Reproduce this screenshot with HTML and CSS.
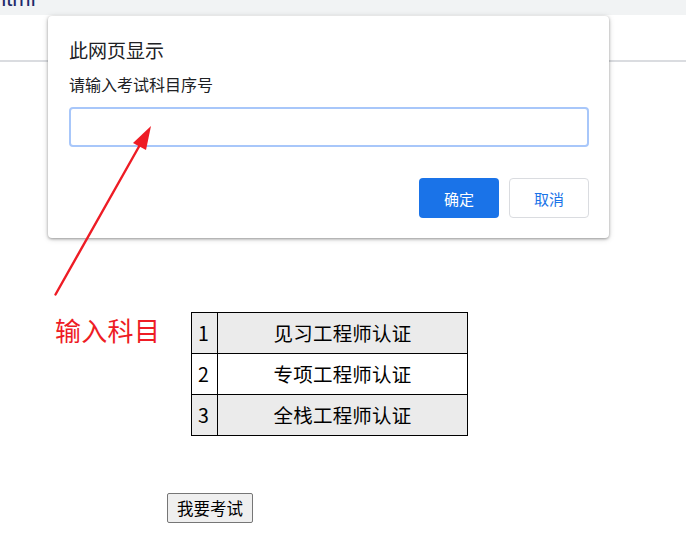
FILE: index.html
```html
<!DOCTYPE html>
<html lang="zh-CN">
<head>
<meta charset="utf-8">
<title>考试</title>
<link rel="stylesheet" href="styles.css">
</head>
<body>
<div class="tabbar"><span class="tabtext">html</span></div>
<div class="toolbar"></div>
<main class="page">
  <div class="row">
    <div class="note">输入科目</div>
    <table class="subjects">
      <tr class="odd"><td class="num">1</td><td class="name">见习工程师认证</td></tr>
      <tr><td class="num">2</td><td class="name">专项工程师认证</td></tr>
      <tr class="odd"><td class="num">3</td><td class="name">全栈工程师认证</td></tr>
    </table>
  </div>
  <button class="exam">我要考试</button>
</main>

<div class="dialog">
  <div class="dlg-title">此网页显示</div>
  <div class="dlg-label">请输入考试科目序号</div>
  <div class="dlg-input"></div>
  <div class="dlg-actions">
    <button class="btn primary">确定</button>
    <button class="btn secondary">取消</button>
  </div>
</div>

<svg class="arrow" width="686" height="534" viewBox="0 0 686 534">
  <line x1="55.5" y1="294.5" x2="141" y2="143" stroke="#ee1c25" stroke-width="2.4" stroke-linecap="round"/>
  <polygon points="151,126 146,150 133,143" fill="#ee1c25"/>
</svg>
</body>
</html>
```
FILE: styles.css
```css
html, body {
  margin: 0;
  padding: 0;
  background: #ffffff;
  width: 686px;
  height: 534px;
  overflow: hidden;
  font-family: "Noto Sans CJK SC", "Liberation Sans", sans-serif;
}

.tabbar {
  height: 15px;
  background: #f1f3f4;
  overflow: hidden;
  position: relative;
}
.tabtext {
  display: block;
  margin-top: -12px;
  margin-left: -6px;
  font-family: "Liberation Sans", sans-serif;
  font-size: 22px;
  line-height: 22px;
  color: #1f2a6b;
}

.toolbar {
  height: 45px;
  border-bottom: 2px solid #dadce0;
}

.page {
  padding-top: 250px;
  padding-left: 55px;
}

.row {
  display: flex;
  align-items: flex-start;
}

.note {
  color: #ee1c25;
  font-size: 26px;
  line-height: 36px;
  width: 136px;
  margin-top: 0;
  letter-spacing: 0.3px;
  white-space: nowrap;
}

.subjects {
  border-collapse: collapse;
  font-size: 19.5px;
  color: #000;
}
.subjects td {
  border: 1px solid #000;
  height: 40px;
  padding: 0;
  line-height: 40px;
}
.subjects tr.odd td { background: #ebebeb; }
.subjects .num {
  width: 26px;
  padding-left: 6px;
  box-sizing: border-box;
}
.subjects .name {
  width: 249px;
  text-align: center;
  letter-spacing: 0.2px;
}

.exam {
  display: block;
  margin-top: 57px;
  margin-left: 112px;
  height: 30px;
  padding: 0 9px;
  font-family: "Noto Sans CJK SC", sans-serif;
  font-size: 16.5px;
  line-height: 28px;
  color: #000;
  background: #efefef;
  border: 1px solid #767676;
  border-radius: 2px;
}

.dialog {
  position: absolute;
  left: 48px;
  top: 16px;
  width: 561px;
  height: 222px;
  box-sizing: border-box;
  background: #fff;
  border-radius: 4px;
  box-shadow: 0 1px 3px rgba(0,0,0,0.35), 0 1px 6px rgba(0,0,0,0.15);
  padding: 22px 20px 0 21px;
}
.dlg-title {
  font-size: 19px;
  line-height: 24px;
  color: #202124;
}
.dlg-label {
  margin-top: 12px;
  font-size: 16px;
  line-height: 20px;
  color: #202124;
}
.dlg-input {
  margin-top: 13px;
  height: 40px;
  box-sizing: border-box;
  border: 2px solid #a8c7fa;
  border-radius: 4px;
}
.dlg-actions {
  display: flex;
  justify-content: flex-end;
  gap: 10px;
  margin-top: 31px;
}
.btn {
  width: 80px;
  height: 40px;
  box-sizing: border-box;
  border-radius: 4px;
  font-family: "Noto Sans CJK SC", sans-serif;
  font-size: 15px;
  padding: 0;
}
.btn.primary {
  background: #1a73e8;
  color: #fff;
  border: none;
}
.btn.secondary {
  background: #fff;
  color: #1a73e8;
  border: 1px solid #dadce0;
}

.arrow {
  position: absolute;
  left: 0;
  top: 0;
  pointer-events: none;
}
```
